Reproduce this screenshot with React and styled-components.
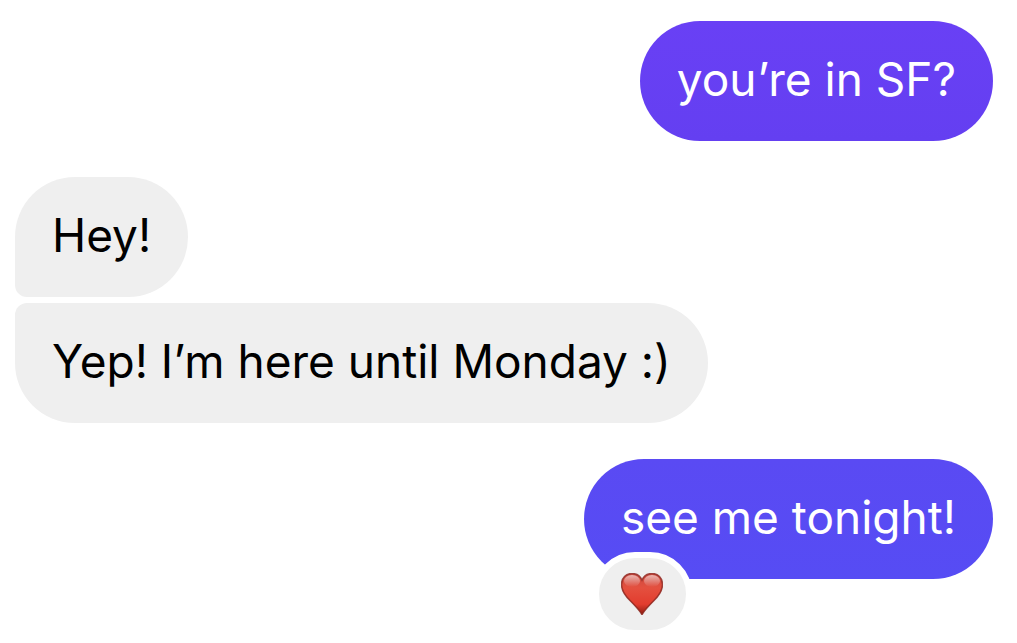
import React from "react";
import styled, { createGlobalStyle } from "styled-components";

const GlobalStyle = createGlobalStyle`
  * { box-sizing: border-box; }
  body {
    margin: 0;
    background: #fff;
    font-family: Inter, "Liberation Sans", sans-serif;
  }
`;

const Thread = styled.main`
  display: flex;
  flex-direction: column;
  gap: 36px;
  padding: 21px 24px 64px 15px;
`;

const Group = styled.section`
  display: flex;
  flex-direction: column;
  align-items: ${({ $sent }) => ($sent ? "flex-end" : "flex-start")};
  gap: 6px;
`;

const Bubble = styled.div`
  position: relative;
  padding: 28px 37px 32px;
  border-radius: ${({ $radius }) => $radius || "60px"};
  background: ${({ $fill }) => $fill || "#efefef"};
  color: ${({ $ink }) => $ink || "#000"};
`;

const Message = styled.p`
  margin: 0;
  font-size: 46px;
  line-height: 60px;
`;

const Reaction = styled.button`
  position: absolute;
  left: 9px;
  bottom: -57px;
  display: flex;
  align-items: center;
  justify-content: center;
  width: 99px;
  height: 84px;
  padding: 0;
  border: 6px solid #fff;
  border-radius: 42px;
  background: #efefef;
`;

function Heart() {
  const shape =
    "M21 41.500C18 36.500 13.500 32 9 27.500C4 22.500.5 17.500.5 11.500C.5 5 5 .5 11 .5C15.500.5 19.300 3 21 7C22.700 3 26.500.5 31 .5C37 .5 41.500 5 41.500 11.500C41.500 17.500 38 22.500 33 27.500C28.500 32 24 36.500 21 41.500Z";
  return (
    <svg width="42" height="42" viewBox="0 0 42 42" aria-hidden="true">
      <defs>
        <linearGradient id="heartFill" x1="0" y1="0" x2="0" y2="1">
          <stop offset="0" stopColor="#c94a40" />
          <stop offset="0.35" stopColor="#e4503f" />
          <stop offset="0.75" stopColor="#e23c2e" />
          <stop offset="1" stopColor="#8e1c12" />
        </linearGradient>
        <linearGradient id="heartEdge" x1="0" y1="0" x2="0" y2="1">
          <stop offset="0" stopColor="#94302a" />
          <stop offset="1" stopColor="#8a1f16" />
        </linearGradient>
        <linearGradient id="heartShine" x1="0" y1="0" x2="0" y2="1">
          <stop offset="0" stopColor="#fff" stopOpacity="0.6" />
          <stop offset="1" stopColor="#fff" stopOpacity="0" />
        </linearGradient>
      </defs>
      <path d={shape} fill="url(#heartFill)" />
      <ellipse cx="11" cy="8" rx="8" ry="6" fill="url(#heartShine)" />
      <ellipse cx="31" cy="8" rx="8" ry="6" fill="url(#heartShine)" />
      <path d={shape} fill="none" stroke="url(#heartEdge)" strokeWidth="1.500" strokeOpacity="0.85" />
    </svg>
  );
}

export default function App() {
  return (
    <>
      <GlobalStyle />
      <Thread>
        <Group $sent>
          <Bubble $fill="linear-gradient(#6940f5, #643ff1)" $ink="#fff">
            <Message>you’re in SF?</Message>
          </Bubble>
        </Group>
        <Group>
          <Bubble $radius="60px 60px 60px 12px">
            <Message>Hey!</Message>
          </Bubble>
          <Bubble $radius="12px 60px 60px 60px">
            <Message>Yep! I’m here until Monday :)</Message>
          </Bubble>
        </Group>
        <Group $sent>
          <Bubble $fill="linear-gradient(#5a4af3, #564cf4)" $ink="#fff">
            <Message>see me tonight!</Message>
            <Reaction type="button" aria-label="Heart reaction">
              <Heart />
            </Reaction>
          </Bubble>
        </Group>
      </Thread>
    </>
  );
}
